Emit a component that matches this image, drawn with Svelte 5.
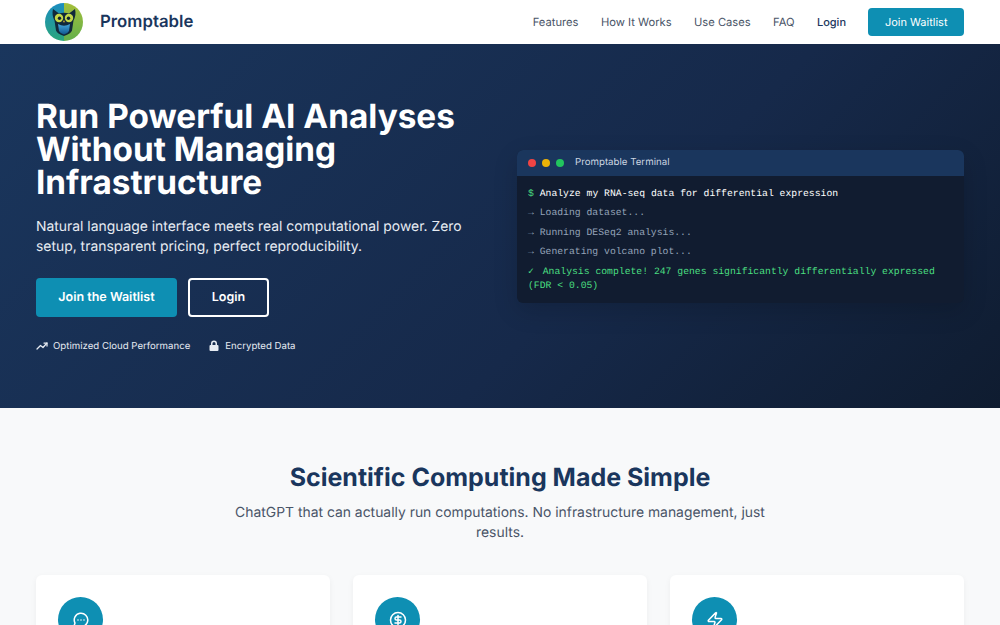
<script>
	const links = ['Features', 'How It Works', 'Use Cases', 'FAQ'];
	const steps = ['Loading dataset...', 'Running DESeq2 analysis...', 'Generating volcano plot...'];
</script>

<div class="page">
	<header class="nav">
		<a class="brand" href="#top">
			<svg class="logo" viewBox="0 0 38 38" aria-hidden="true">
				<defs>
					<clipPath id="disc"><circle cx="19" cy="19" r="19" /></clipPath>
					<linearGradient id="left" x1="0" y1="0" x2="0" y2="1">
						<stop offset="0" stop-color="#1b8cc0" />
						<stop offset="1" stop-color="#2aa67c" />
					</linearGradient>
					<linearGradient id="right" x1="0" y1="0" x2="0" y2="1">
						<stop offset="0" stop-color="#a5bf3a" />
						<stop offset="1" stop-color="#62b04c" />
					</linearGradient>
					<linearGradient id="body" x1="0" y1="0" x2="0" y2="1">
						<stop offset="0" stop-color="#45a8dc" />
						<stop offset="1" stop-color="#0f568f" />
					</linearGradient>
				</defs>
				<g clip-path="url(#disc)">
					<rect width="19" height="38" fill="url(#left)" />
					<rect x="19" width="19" height="38" fill="url(#right)" />
				</g>
				<path d="M8 6l6 4.500q5-1.500 10 0l6-4.500q1.500 6-1.500 11.500l-1.500 10q-1 3-8 5.500q-7-2.500-8-5.500l-1.500-10q-3-5.500-1.500-11.500z" fill="#11293a" />
				<path d="M13 21q6 3.500 12 0l-1 7q-1 2-5 3.500q-4-1.500-5-3.500z" fill="url(#body)" />
				<circle cx="14" cy="15" r="4.200" fill="#c2d748" />
				<circle cx="24" cy="15" r="4.200" fill="#c2d748" />
				<circle cx="14.500" cy="15.300" r="1.700" fill="#10222f" />
				<circle cx="23.500" cy="15.300" r="1.700" fill="#10222f" />
				<path d="M19 17l-1.200 2.300h2.400z" fill="#c9a83a" />
			</svg>
			<span>Promptable</span>
		</a>
		<nav class="links">
			{#each links as link}
				<a href="#top">{link}</a>
			{/each}
			<a class="login" href="#top">Login</a>
			<a class="cta" href="#top">Join Waitlist</a>
		</nav>
	</header>

	<section class="hero">
		<div class="intro">
			<h1>Run Powerful AI Analyses Without Managing Infrastructure</h1>
			<p>Natural language interface meets real computational power. Zero setup, transparent pricing, perfect reproducibility.</p>
			<div class="actions">
				<a class="btn primary" href="#top">Join the Waitlist</a>
				<a class="btn outline" href="#top">Login</a>
			</div>
			<div class="trust">
				<span>
					<svg width="12" height="12" viewBox="0 0 24 24" fill="none" stroke="currentColor" stroke-width="2.500" stroke-linecap="round" stroke-linejoin="round">
						<path d="M2 18l7-7 5 4 8-9" />
						<path d="M16 6h6v6" />
					</svg>
					Optimized Cloud Performance
				</span>
				<span>
					<svg width="12" height="12" viewBox="0 0 24 24" fill="currentColor">
						<path d="M6 10V7a6 6 0 0 1 12 0v3h1a2 2 0 0 1 2 2v8a2 2 0 0 1-2 2H5a2 2 0 0 1-2-2v-8a2 2 0 0 1 2-2zm3 0h6V7a3 3 0 0 0-6 0z" />
					</svg>
					Encrypted Data
				</span>
			</div>
		</div>

		<div class="terminal">
			<div class="bar">
				<i class="dot red"></i>
				<i class="dot yellow"></i>
				<i class="dot green"></i>
				<span>Promptable Terminal</span>
			</div>
			<div class="output">
				<div class="line"><b>$</b> <span class="cmd">Analyze my RNA-seq data for differential expression</span></div>
				{#each steps as step}
					<div class="line muted">→ {step}</div>
				{/each}
				<div class="line done"><span class="check">✓</span> Analysis complete! 247 genes significantly differentially expressed (FDR &lt; 0.05)</div>
			</div>
		</div>
	</section>

	<section class="features">
		<h2>Scientific Computing Made Simple</h2>
		<p class="lead">ChatGPT that can actually run computations. No infrastructure management, just results.</p>
		<div class="cards">
			<div class="card">
				<div class="icon">
					<svg width="18" height="18" viewBox="0 0 24 24" fill="none" stroke="currentColor" stroke-width="2" stroke-linecap="round" stroke-linejoin="round">
						<path d="M7.900 20A9 9 0 1 0 4 16.100L2 22z" />
						<path d="M8 12h.01M12 12h.01M16 12h.01" />
					</svg>
				</div>
			</div>
			<div class="card">
				<div class="icon">
					<svg width="18" height="18" viewBox="0 0 24 24" fill="none" stroke="currentColor" stroke-width="2" stroke-linecap="round" stroke-linejoin="round">
						<circle cx="12" cy="12" r="10" />
						<path d="M16 8h-6a2 2 0 1 0 0 4h4a2 2 0 1 1 0 4H8" />
						<path d="M12 18V6" />
					</svg>
				</div>
			</div>
			<div class="card">
				<div class="icon">
					<svg width="18" height="18" viewBox="0 0 24 24" fill="none" stroke="currentColor" stroke-width="2" stroke-linecap="round" stroke-linejoin="round">
						<path d="M4 14a1 1 0 0 1-.78-1.630l9.900-10.200a.5.5 0 0 1 .86.460l-1.920 6.020A1 1 0 0 0 13 10h7a1 1 0 0 1 .78 1.630l-9.900 10.200a.5.5 0 0 1-.86-.460l1.920-6.020A1 1 0 0 0 11 14z" />
					</svg>
				</div>
			</div>
		</div>
	</section>
</div>

<style>
	:global(body) {
		margin: 0;
	}

	.page {
		height: 625px;
		overflow: hidden;
		font-family: Inter, 'Noto Sans', sans-serif;
		text-rendering: geometricPrecision;
		color: #1a365d;
		background: #f8f9fa;
	}

	a {
		text-decoration: none;
		color: inherit;
	}

	.nav {
		height: 44px;
		box-sizing: border-box;
		padding: 0 36px 0 45px;
		display: flex;
		align-items: center;
		justify-content: space-between;
		background: white;
	}

	.brand {
		display: flex;
		align-items: center;
		gap: 17px;
		font-size: 16.800px;
		font-weight: 600;
	}

	.logo {
		width: 38px;
		height: 38px;
	}

	.links {
		display: flex;
		align-items: center;
		gap: 22.400px;
		font-size: 11.200px;
		color: #4a5568;
	}

	.links .login {
		font-size: 11px;
		font-weight: 500;
		color: #1a365d;
	}

	.links .cta {
		padding: 7px 16.500px;
		border-radius: 4px;
		background: #0e8fb3;
		color: white;
		font-size: 11px;
		font-weight: 400;
	}

	.hero {
		height: 364px;
		box-sizing: border-box;
		padding: 0 36px;
		display: grid;
		grid-template-columns: 1fr 447px;
		gap: 36px;
		align-items: center;
		color: white;
		background: linear-gradient(135deg, #1a365d 0%, #16294a 60%, #0f1c30 100%);
	}

	.intro {
		padding-top: 1px;
	}

	h1 {
		margin: 0 0 17px;
		font-size: 33.300px;
		line-height: 33px;
		font-weight: 700;
	}

	.intro p {
		margin: 0 0 21px;
		font-size: 13.900px;
		line-height: 20px;
		color: #e6ebf2;
	}

	.actions {
		display: flex;
		gap: 11px;
	}

	.btn {
		height: 39px;
		box-sizing: border-box;
		display: flex;
		align-items: center;
		justify-content: center;
		border-radius: 4px;
		font-size: 12.500px;
		font-weight: 600;
	}

	.primary {
		width: 141px;
		background: #0e8fb3;
	}

	.outline {
		width: 81px;
		border: 2px solid white;
	}

	.trust {
		display: flex;
		gap: 18px;
		margin-top: 23px;
		font-size: 9.650px;
		color: #e6ebf2;
	}

	.trust span {
		display: flex;
		align-items: center;
		gap: 5px;
	}

	.terminal {
		border-radius: 6px;
		overflow: hidden;
		background: #111c30;
		box-shadow: 0 8px 24px rgba(0, 0, 0, 0.15);
	}

	.bar {
		height: 26px;
		padding: 0 11px;
		display: flex;
		align-items: center;
		gap: 6px;
		background: #1a365d;
		font-size: 9.700px;
		color: #cbd5e0;
	}

	.bar span {
		margin-left: 5px;
	}

	.dot {
		width: 8px;
		height: 8px;
		border-radius: 50%;
	}

	.red { background: #ef4444; }
	.yellow { background: #eab308; }
	.green { background: #22c55e; }

	.output {
		padding: 11px 11px 10px;
		font-family: 'Liberation Mono', monospace;
		font-size: 9.750px;
		line-height: 14px;
	}

	.line {
		margin-bottom: 5.500px;
	}

	.line:last-child {
		margin-bottom: 0;
	}

	.line b {
		font-weight: 400;
		color: #4ade80;
	}

	.cmd {
		color: white;
	}

	.muted {
		color: #94a3b8;
	}

	.done {
		color: #4ade80;
	}

	.check {
		margin-right: 3px;
	}

	.features {
		padding-top: 55px;
		text-align: center;
	}

	h2 {
		margin: 0 0 9px;
		font-size: 25px;
		line-height: 31px;
		font-weight: 700;
	}

	.lead {
		width: 560px;
		margin: 0 auto 32px;
		font-size: 13.900px;
		line-height: 20px;
		color: #4a5568;
	}

	.cards {
		display: grid;
		grid-template-columns: repeat(3, 1fr);
		gap: 23px;
		padding: 0 36px;
	}

	.card {
		height: 200px;
		padding: 22px;
		background: white;
		border-radius: 6px;
		box-shadow: 0 2px 6px rgba(0, 0, 0, 0.05);
	}

	.icon {
		width: 45px;
		height: 45px;
		display: flex;
		align-items: center;
		justify-content: center;
		border-radius: 50%;
		background: #0e8fb3;
		color: white;
	}
</style>
